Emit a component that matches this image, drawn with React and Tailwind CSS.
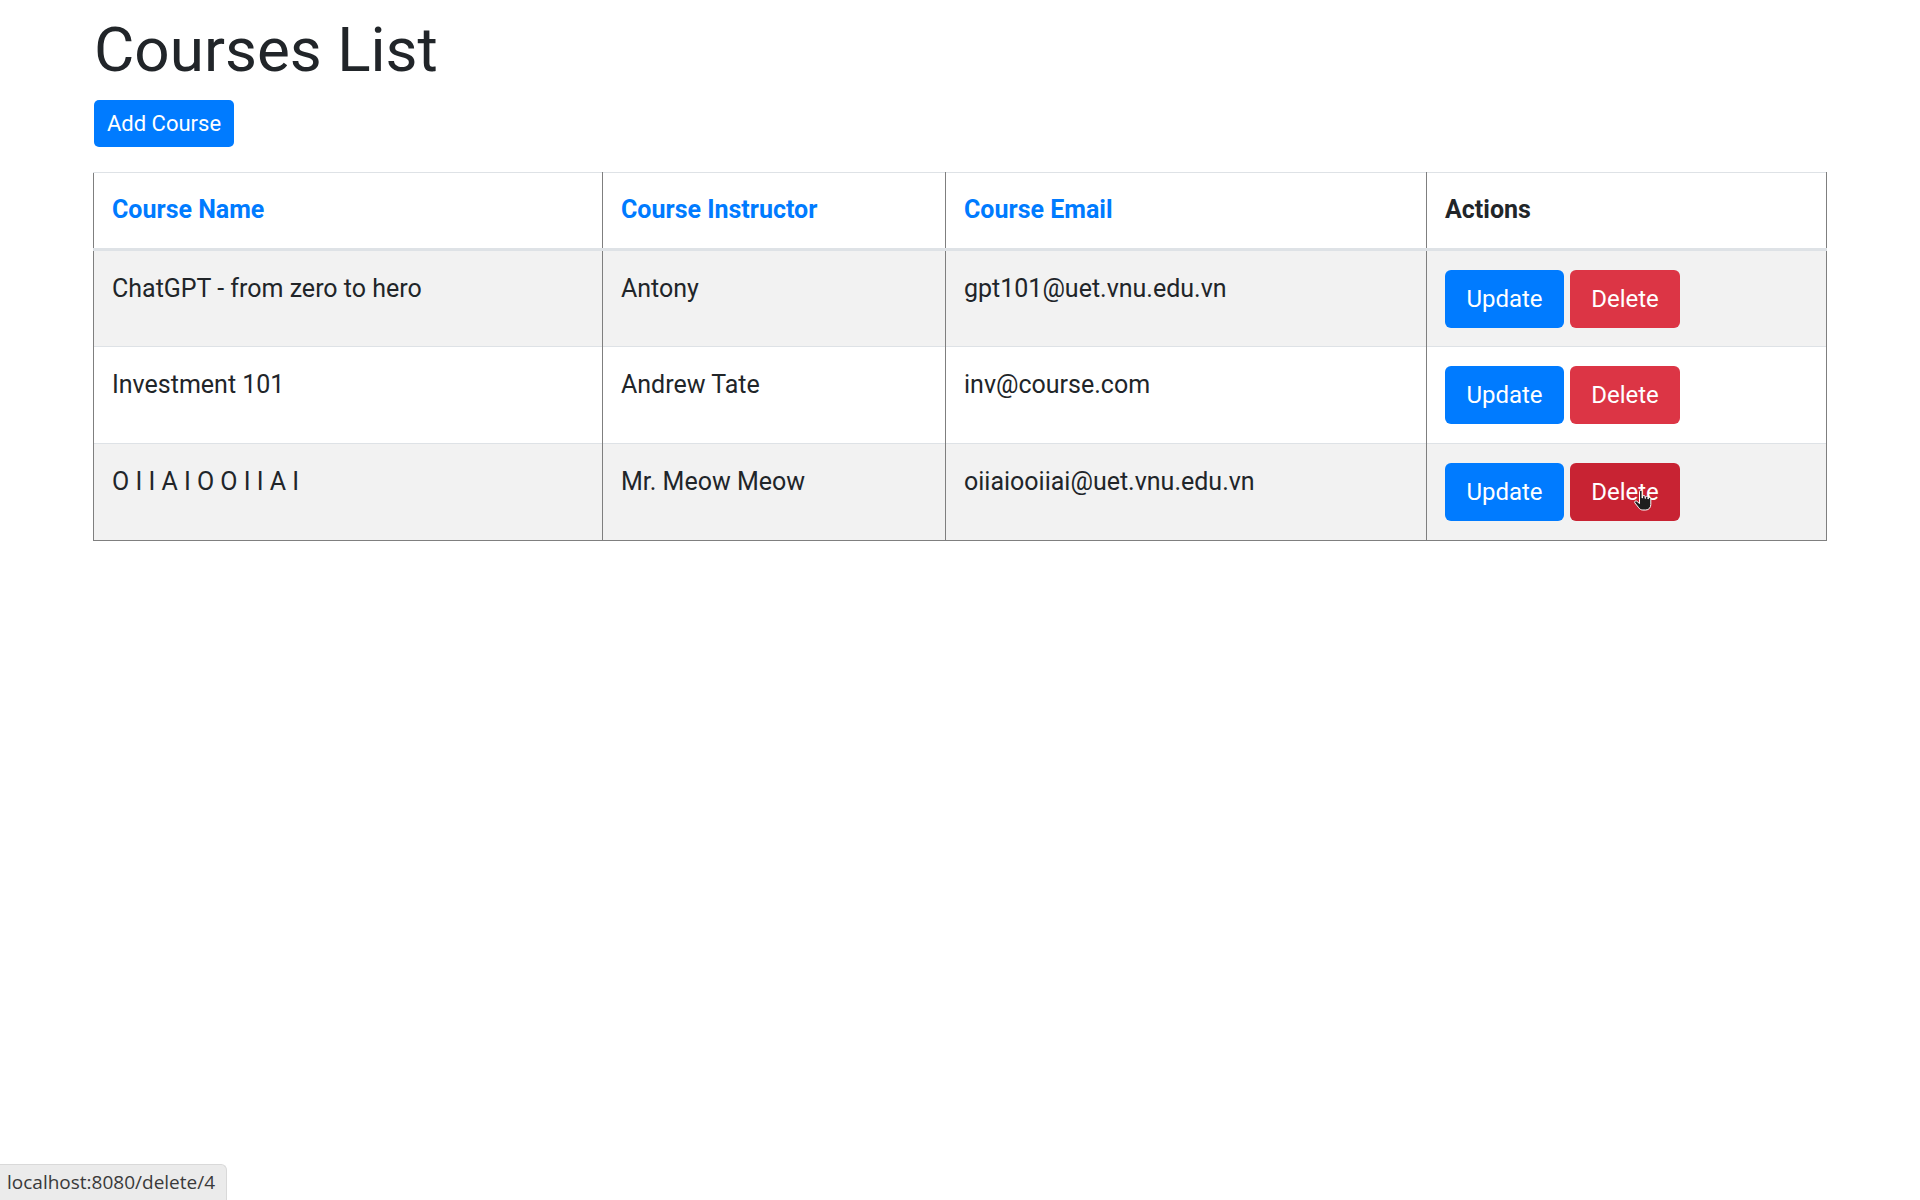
import React from "react";

const rows = [
  { name: "ChatGPT - from zero to hero", instructor: "Antony", email: "gpt101@uet.vnu.edu.vn", striped: true },
  { name: "Investment 101", instructor: "Andrew Tate", email: "inv@course.com", striped: false },
  { name: "O I I A I O O I I A I", instructor: "Mr. Meow Meow", email: "oiiaiooiiai@uet.vnu.edu.vn", striped: true, hover: true },
];

function HandCursor() {
  return (
    <svg
      className="absolute left-[63px] top-[27px] pointer-events-none"
      width="19"
      height="21"
      viewBox="0 0 19 21"
    >
      <path
        d="M6.5 1.6a1.3 1.3 0 0 1 2.6 0V8h.4V6.8a1.3 1.3 0 0 1 2.6 0V8.4h.3V7.6a1.3 1.3 0 0 1 2.6 0V9h.2v-.2a1.3 1.3 0 0 1 2.6 0V14.5c0 3-2 5.5-5 5.5H9.8c-1.8 0-3-.8-4-2.2L1.8 12.8a1.3 1.3 0 0 1 2-1.6l2.7 2.4V1.6z"
        fill="#1e1e1e"
        stroke="#ffffff"
        strokeWidth="1"
        strokeLinejoin="round"
      />
    </svg>
  );
}

export default function App() {
  return (
    <div className="min-h-screen bg-white font-['Roboto',sans-serif] text-[#212529] relative">
      <div className="w-[1734px] mx-auto pt-[14px]">
        <h1 className="text-[62px] leading-[72px] font-normal mb-[14px] ml-[1px]">Courses List</h1>
        <button className="h-[47px] w-[140px] ml-[1px] bg-[#007bff] text-white text-[22px] leading-[31px] rounded-[5px] flex items-center justify-center">
          Add Course
        </button>
        <table className="mt-[25px] w-[1733px] table-fixed border-collapse text-[25px] leading-[36px]">
          <colgroup>
            <col className="w-[509px]" />
            <col className="w-[343px]" />
            <col className="w-[481px]" />
            <col className="w-[400px]" />
          </colgroup>
          <thead>
            <tr>
              <th className="text-left font-bold pl-[18px] pt-[19px] pb-[20px] border-t border-t-[#dee2e6] border-b-[3px] border-b-[#dee2e6] border-x border-x-[#7f7f7f] text-[#007bff]">
                Course Name
              </th>
              <th className="text-left font-bold pl-[18px] pt-[19px] pb-[20px] border-t border-t-[#dee2e6] border-b-[3px] border-b-[#dee2e6] border-x border-x-[#7f7f7f] text-[#007bff]">
                Course Instructor
              </th>
              <th className="text-left font-bold pl-[18px] pt-[19px] pb-[20px] border-t border-t-[#dee2e6] border-b-[3px] border-b-[#dee2e6] border-x border-x-[#7f7f7f] text-[#007bff]">
                Course Email
              </th>
              <th className="text-left font-bold pl-[18px] pt-[19px] pb-[20px] border-t border-t-[#dee2e6] border-b-[3px] border-b-[#dee2e6] border-x border-x-[#7f7f7f] text-[#212529]">
                Actions
              </th>
            </tr>
          </thead>
          <tbody>
            {rows.map((r, i) => {
              const last = i === rows.length - 1;
              const base =
                "align-top pl-[18px] h-[97px] border-x border-x-[#7f7f7f] " +
                (i === 0 ? "" : "border-t border-t-[#dee2e6] ") +
                (last ? "border-b border-b-[#7f7f7f] " : "");
              const cell = base + "pt-[20px]";
              return (
                <tr key={i} className={r.striped ? "bg-[#f2f2f2]" : "bg-white"}>
                  <td className={cell}>{r.name}</td>
                  <td className={cell}>{r.instructor}</td>
                  <td className={cell}>{r.email}</td>
                  <td className={base + "pt-[19px]"}>
                    <div className="flex gap-[6px]">
                      <button className="h-[58px] w-[119px] bg-[#007bff] text-white rounded-[6px] text-[24px] leading-[36px] flex items-center justify-center">
                        Update
                      </button>
                      <button
                        className={
                          "relative h-[58px] w-[110px] text-white rounded-[6px] text-[24px] leading-[36px] flex items-center justify-center " +
                          (r.hover ? "bg-[#c82333]" : "bg-[#dc3545]")
                        }
                      >
                        Delete
                        {r.hover && <HandCursor />}
                      </button>
                    </div>
                  </td>
                </tr>
              );
            })}
          </tbody>
        </table>
      </div>
      <div className="fixed left-0 bottom-0 h-[36px] w-[227px] bg-[#ebebeb] border-t border-r border-[#d9d9d9] rounded-tr-[6px] flex items-center pl-[7px] font-['Open_Sans',sans-serif] text-[19px] text-[#3a3a3a]">
        localhost:8080/delete/4
      </div>
    </div>
  );
}
